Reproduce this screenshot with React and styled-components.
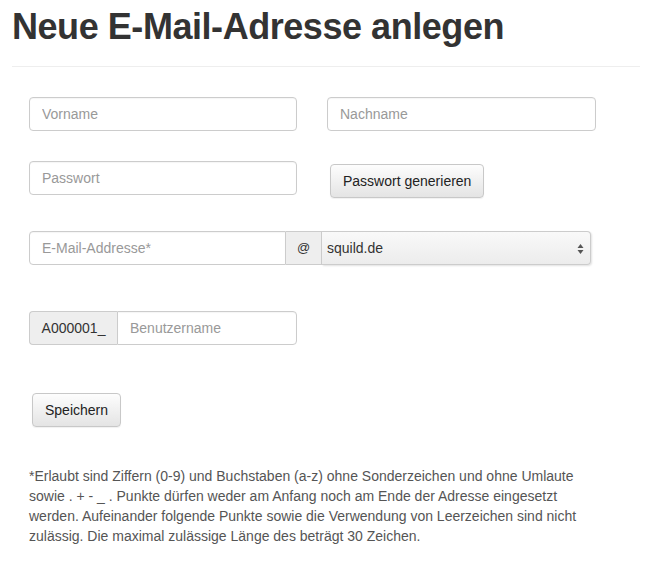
import React from "react";
import styled, { createGlobalStyle } from "styled-components";

const Global = createGlobalStyle`
  html, body { margin: 0; padding: 0; background: #fff; }
  body { font-family: "Liberation Sans", Arial, Helvetica, sans-serif; color: #333; font-size: 14px; }
  * { box-sizing: border-box; }
`;

const Page = styled.div`
  padding: 0 13px 0 12px;
  width: 653px;
`;

const Title = styled.h1`
  margin: 0;
  padding: 7px 0 19px;
  font-size: 36px;
  letter-spacing: -0.45px;
  line-height: 1.1;
  font-weight: 700;
  color: #333;
  border-bottom: 1px solid #eee;
`;

const Form = styled.form`
  padding-left: 17px;
  display: flex;
  flex-direction: column;
  align-items: flex-start;
`;

const Row = styled.div`
  display: flex;
  align-items: flex-start;
  gap: ${(p) => p.$gap || 0}px;
  margin-top: ${(p) => p.$top}px;
`;

const Input = styled.input`
  height: 34px;
  width: ${(p) => p.$w}px;
  padding: 6px 12px;
  font: inherit;
  font-size: 14px;
  color: #555;
  border: 1px solid #ccc;
  border-radius: ${(p) => p.$radius || "4px"};
  box-shadow: inset 0 1px 1px rgba(0,0,0,0.04);
  outline: none;
  &::placeholder { color: #999; }
`;

const Button = styled.button`
  height: 34px;
  padding: 0 12px;
  margin: ${(p) => p.$margin || 0};
  font: inherit;
  font-size: 14px;
  color: #222;
  background: linear-gradient(#fdfdfd, #e4e4e4);
  border: 1px solid #c8c8c8;
  border-radius: 4px;
  box-shadow: 0 1px 1px rgba(0,0,0,0.06);
  cursor: pointer;
`;

const Group = styled.div`
  display: flex;
  height: 34px;
`;

const Addon = styled.span`
  display: flex;
  align-items: center;
  justify-content: center;
  width: ${(p) => p.$w}px;
  height: 34px;
  background: #eee;
  border: 1px solid #ccc;
  border-left: ${(p) => (p.$first ? "1px solid #ccc" : "none")};
  border-right: ${(p) => (p.$first ? "none" : "1px solid #ccc")};
  border-radius: ${(p) => (p.$first ? "4px 0 0 4px" : "0")};
  color: #333;
  font-size: ${(p) => p.$size || 14}px;
`;

const Select = styled.div`
  position: relative;
  display: flex;
  align-items: center;
  width: 269px;
  height: 34px;
  padding-left: 5px;
  border: 1px solid #ccc;
  border-left: none;
  border-radius: 0 4px 4px 0;
  background: linear-gradient(#f9f9f9, #ececec);
  box-shadow: 1px 1px 2px rgba(0,0,0,0.12);
  color: #333;
  font-size: 14px;
`;

const Arrows = styled.svg`
  position: absolute;
  right: 6px;
  top: 11px;
`;

const Note = styled.p`
  margin: 39px 0 0;
  color: #555;
  font-size: 14px;
  line-height: 20px;
  white-space: nowrap;
`;

export default function App() {
  return (
    <>
      <Global />
      <Page>
        <Title>Neue E-Mail-Adresse anlegen</Title>
        <Form onSubmit={(e) => e.preventDefault()}>
          <Row $top={30} $gap={30}>
            <Input $w={268} placeholder="Vorname" />
            <Input $w={269} placeholder="Nachname" />
          </Row>
          <Row $top={30} $gap={30}>
            <Input $w={268} placeholder="Passwort" />
            <Button type="button" $margin="3px 0 0 3px">Passwort generieren</Button>
          </Row>
          <Row $top={33}>
            <Group>
              <Input $w={257} $radius="4px 0 0 4px" placeholder="E-Mail-Addresse*" />
              <Addon $w={36} $size={13}>@</Addon>
              <Select>
                squild.de
                <Arrows width="7" height="12" viewBox="0 0 7 12">
                  <path d="M3.5 1 L6.5 5 L0.5 5 Z" fill="#555" />
                  <path d="M3.5 11 L6.5 7 L0.5 7 Z" fill="#555" />
                </Arrows>
              </Select>
            </Group>
          </Row>
          <Row $top={46}>
            <Group>
              <Addon $w={88} $first>A000001_</Addon>
              <Input $w={180} $radius="0 4px 4px 0" placeholder="Benutzername" />
            </Group>
          </Row>
          <Row $top={48}>
            <Button type="submit" $margin="0 0 0 3px">Speichern</Button>
          </Row>
          <Note>
            *Erlaubt sind Ziffern (0-9) und Buchstaben (a-z) ohne Sonderzeichen und ohne Umlaute<br />
            sowie . + - _ . Punkte dürfen weder am Anfang noch am Ende der Adresse eingesetzt<br />
            werden. Aufeinander folgende Punkte sowie die Verwendung von Leerzeichen sind nicht<br />
            zulässig. Die maximal zulässige Länge des beträgt 30 Zeichen.
          </Note>
        </Form>
      </Page>
    </>
  );
}
